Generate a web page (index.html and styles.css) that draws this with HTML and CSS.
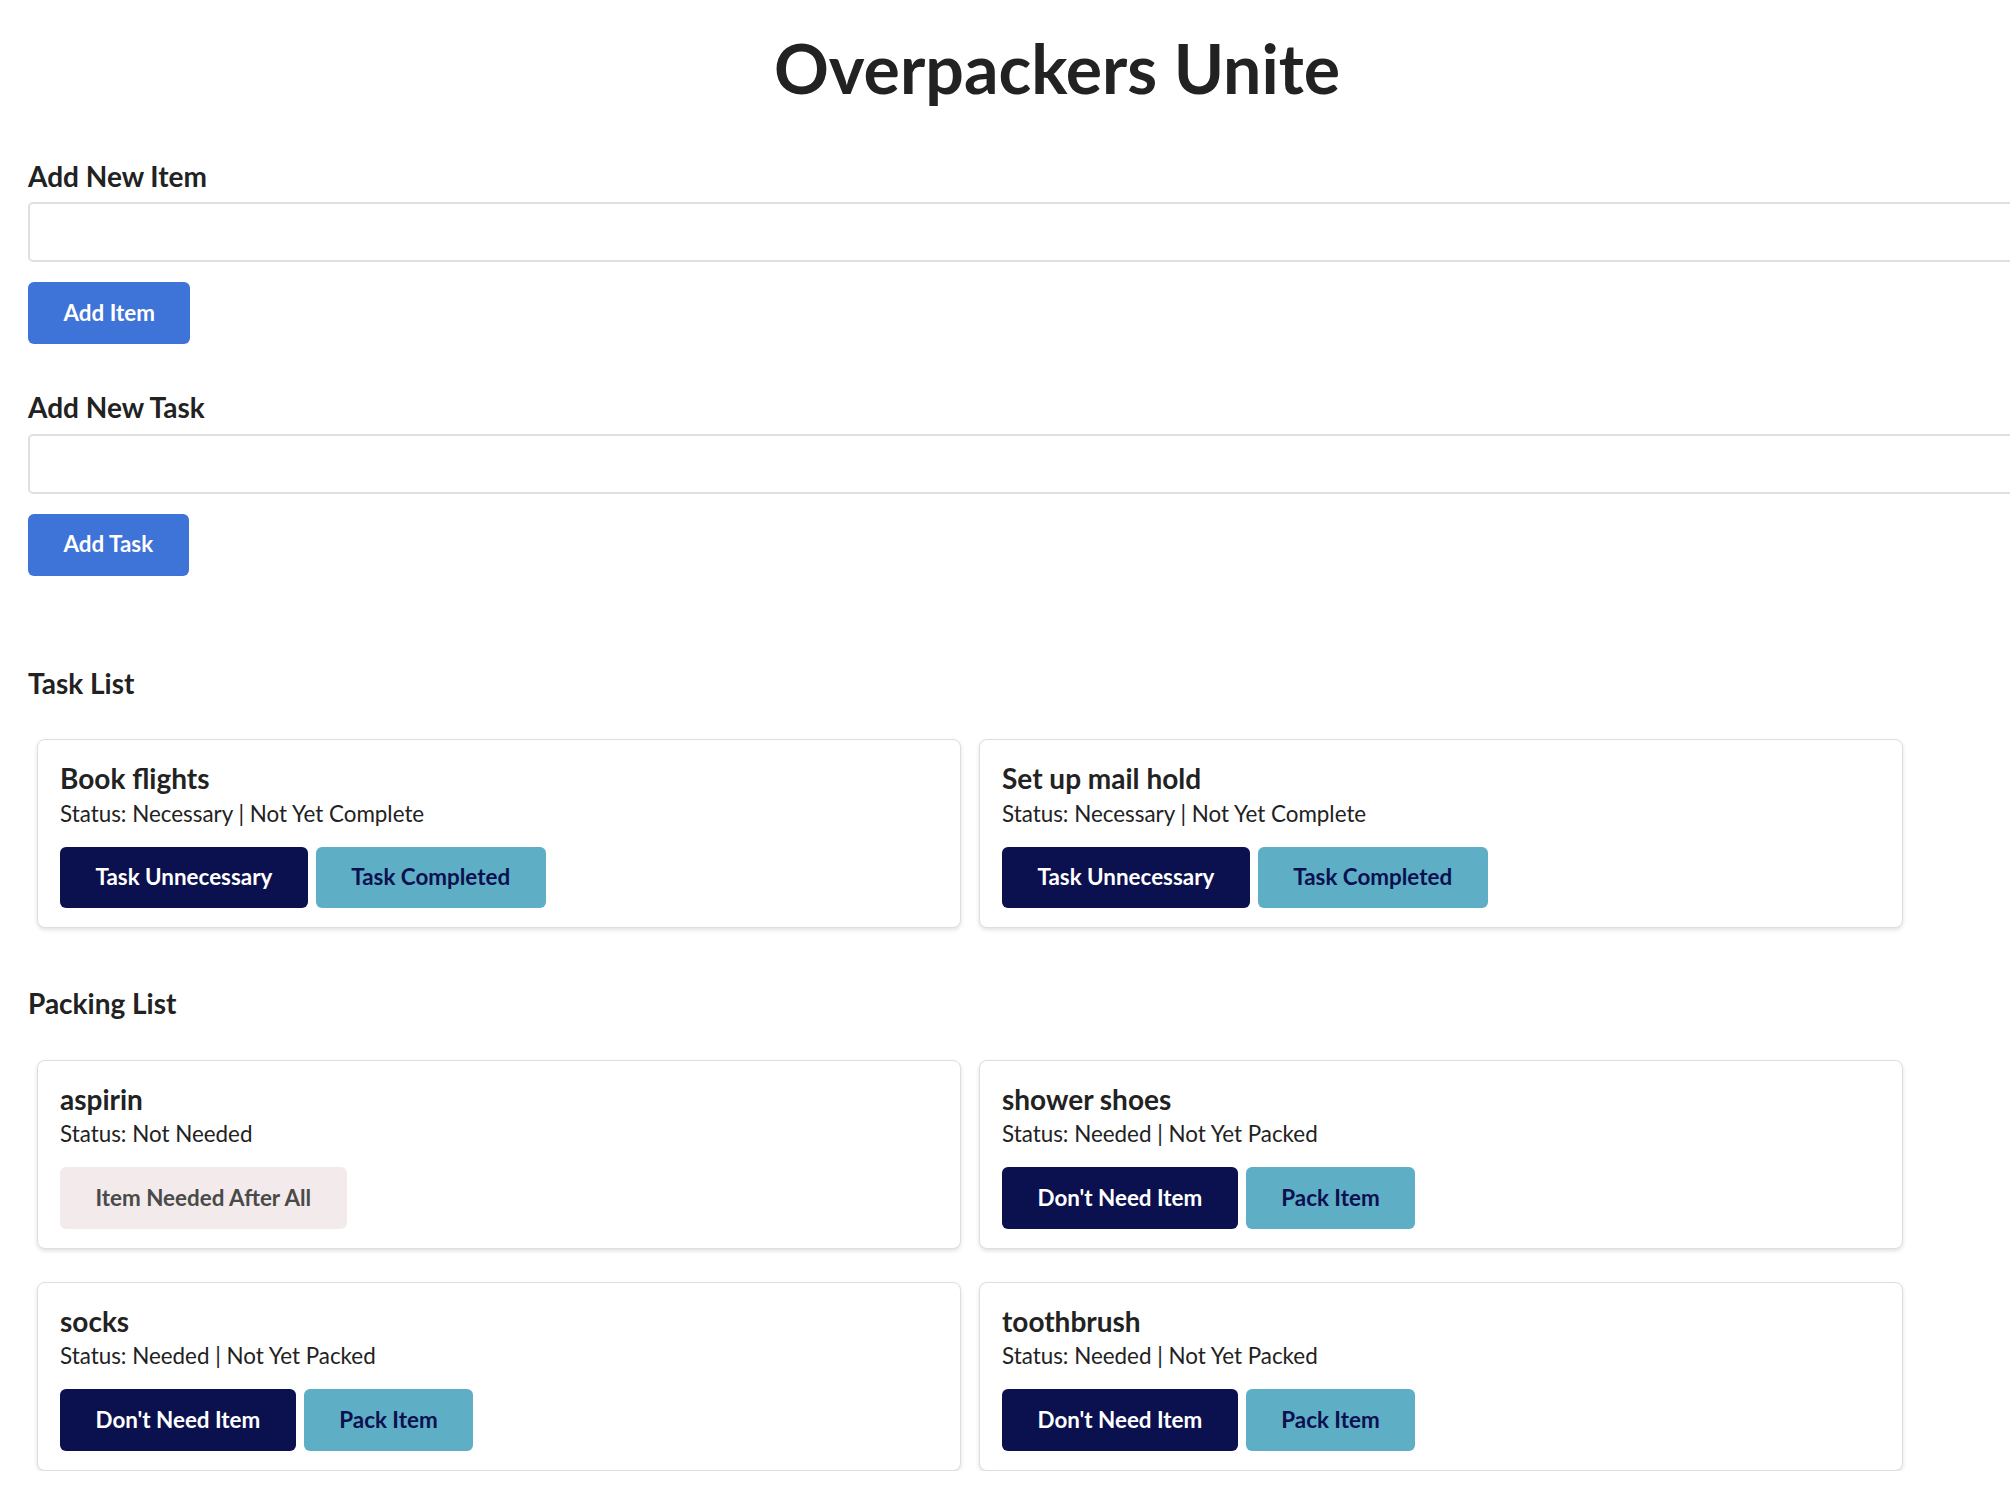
FILE: index.html
```html
<!DOCTYPE html>
<html lang="en">
<head>
<meta charset="utf-8">
<title>Overpackers Unite</title>
<link rel="stylesheet" href="styles.css">
</head>
<body>
<div class="app">
  <h1 class="title">Overpackers Unite</h1>

  <section class="form">
    <h3 class="form-label">Add New Item</h3>
    <input class="text-input" type="text">
    <button class="btn btn-primary">Add Item</button>
  </section>

  <section class="form">
    <h3 class="form-label">Add New Task</h3>
    <input class="text-input" type="text">
    <button class="btn btn-primary">Add Task</button>
  </section>

  <section class="list list-tasks">
    <h3 class="list-heading">Task List</h3>
    <div class="cards">
      <div class="card">
        <h4 class="card-title">Book flights</h4>
        <p class="card-status">Status: Necessary | Not Yet Complete</p>
        <div class="card-actions">
          <button class="btn btn-dark">Task Unnecessary</button>
          <button class="btn btn-teal">Task Completed</button>
        </div>
      </div>
      <div class="card">
        <h4 class="card-title">Set up mail hold</h4>
        <p class="card-status">Status: Necessary | Not Yet Complete</p>
        <div class="card-actions">
          <button class="btn btn-dark">Task Unnecessary</button>
          <button class="btn btn-teal">Task Completed</button>
        </div>
      </div>
    </div>
  </section>

  <section class="list list-packing">
    <h3 class="list-heading">Packing List</h3>
    <div class="cards">
      <div class="card">
        <h4 class="card-title">aspirin</h4>
        <p class="card-status">Status: Not Needed</p>
        <div class="card-actions">
          <button class="btn btn-light">Item Needed After All</button>
        </div>
      </div>
      <div class="card">
        <h4 class="card-title">shower shoes</h4>
        <p class="card-status">Status: Needed | Not Yet Packed</p>
        <div class="card-actions">
          <button class="btn btn-dark">Don't Need Item</button>
          <button class="btn btn-teal">Pack Item</button>
        </div>
      </div>
      <div class="card">
        <h4 class="card-title">socks</h4>
        <p class="card-status">Status: Needed | Not Yet Packed</p>
        <div class="card-actions">
          <button class="btn btn-dark">Don't Need Item</button>
          <button class="btn btn-teal">Pack Item</button>
        </div>
      </div>
      <div class="card">
        <h4 class="card-title">toothbrush</h4>
        <p class="card-status">Status: Needed | Not Yet Packed</p>
        <div class="card-actions">
          <button class="btn btn-dark">Don't Need Item</button>
          <button class="btn btn-teal">Pack Item</button>
        </div>
      </div>
    </div>
  </section>
</div>
</body>
</html>
```

FILE: styles.css
```css
html {
  overflow: hidden;
}

body {
  margin: 0;
  background: #ffffff;
  color: #222222;
  font-family: Lato, "Open Sans", "Liberation Sans", sans-serif;
}

.app {
  width: 2058px;
  padding: 0 0 0 28px;
}

.title {
  margin: 27px 0 0 0;
  font-size: 68px;
  line-height: 1.2;
  font-weight: 700;
  text-align: center;
  color: #222222;
}

.form {
  display: flex;
  flex-direction: column;
  align-items: flex-start;
}

.form:first-of-type {
  margin-top: 51px;
}

.form + .form {
  margin-top: 47px;
}

.form-label {
  margin: 0 0 9px 0;
  font-size: 28px;
  line-height: 1.2;
  font-weight: 700;
  color: #222222;
}

.text-input {
  box-sizing: border-box;
  width: 100%;
  height: 60px;
  margin: 0;
  padding: 0 12px;
  border: 2px solid #e0e0e0;
  border-radius: 5px;
  font-family: inherit;
  font-size: 21px;
  outline: none;
  background: #ffffff;
}

.btn {
  margin: 0;
  padding: 17.5px 35.5px;
  border: 0;
  border-radius: 6px;
  font-family: Lato, "Open Sans", "Liberation Sans", sans-serif;
  font-size: 22.4px;
  line-height: 1.2;
  font-weight: 700;
  cursor: pointer;
}

.form .btn {
  margin-top: 20px;
}

.btn-primary {
  background: #3e73d8;
  color: #ffffff;
}

.btn-dark {
  background: #0b104f;
  color: #ffffff;
}

.btn-teal {
  background: #5eaec6;
  color: #0b104f;
}

.btn-light {
  background: #f2eaeb;
  color: #4a4a4a;
  font-weight: 700;
}

.list-tasks {
  margin-top: 91px;
}

.list-packing {
  margin-top: 59px;
}

.list-heading {
  margin: 0 0 39px 0;
  font-size: 28px;
  line-height: 1.2;
  font-weight: 700;
  color: #222222;
}

.cards {
  display: grid;
  grid-template-columns: 924px 924px;
  column-gap: 18px;
  row-gap: 33px;
  padding-left: 9px;
}

.card {
  box-sizing: border-box;
  height: 189px;
  padding: 22px 22px 18px 22px;
  border: 1px solid #dedede;
  border-radius: 8px;
  background: #ffffff;
  box-shadow: 0 2px 4px rgba(0, 0, 0, 0.12);
}

.card-title {
  margin: 0;
  font-size: 28px;
  line-height: 1.2;
  font-weight: 700;
  color: #222222;
}

.card-status {
  margin: 5px 0 0 0;
  font-size: 22.4px;
  line-height: 1.2;
  color: #222222;
}

.card-actions {
  display: flex;
  gap: 8px;
  margin-top: 19px;
}
```
